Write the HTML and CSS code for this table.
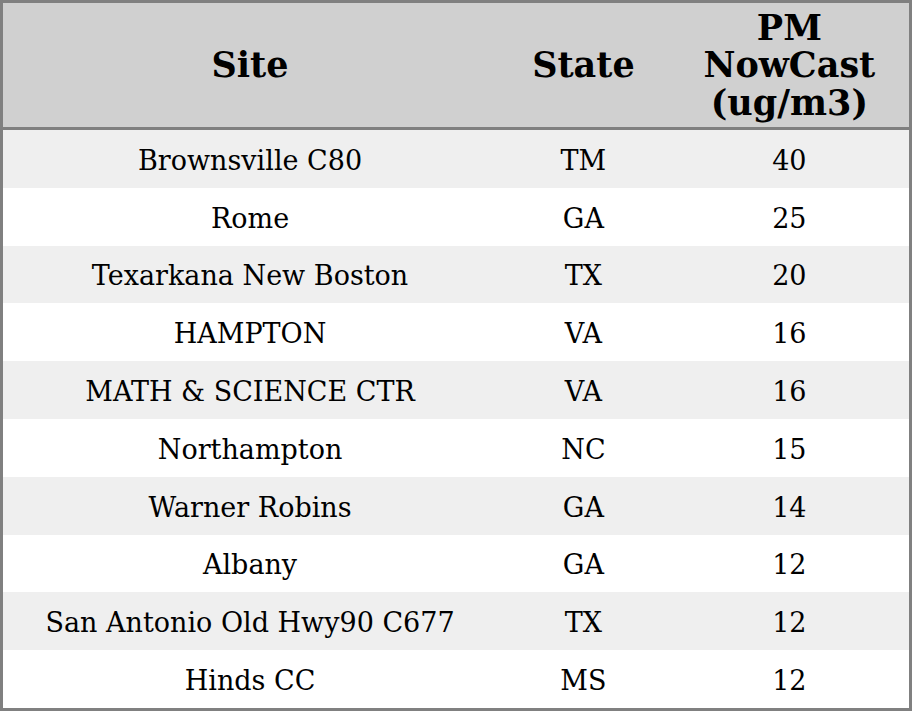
FILE: index.html
```html
<!DOCTYPE html>
<html>
<head>
<meta charset="utf-8">
<link rel="stylesheet" href="styles.css">
</head>
<body>
<table class="aq">
  <colgroup>
    <col class="c-site">
    <col class="c-state">
    <col class="c-pm">
  </colgroup>
  <thead>
    <tr><th>Site</th><th>State</th><th>PM<br>NowCast<br>(ug/m3)</th></tr>
  </thead>
  <tbody>
    <tr><td>Brownsville C80</td><td>TM</td><td>40</td></tr>
    <tr><td>Rome</td><td>GA</td><td>25</td></tr>
    <tr><td>Texarkana New Boston</td><td>TX</td><td>20</td></tr>
    <tr><td>HAMPTON</td><td>VA</td><td>16</td></tr>
    <tr><td>MATH &amp; SCIENCE CTR</td><td>VA</td><td>16</td></tr>
    <tr><td>Northampton</td><td>NC</td><td>15</td></tr>
    <tr><td>Warner Robins</td><td>GA</td><td>14</td></tr>
    <tr><td>Albany</td><td>GA</td><td>12</td></tr>
    <tr><td>San Antonio Old Hwy90 C677</td><td>TX</td><td>12</td></tr>
    <tr><td>Hinds CC</td><td>MS</td><td>12</td></tr>
  </tbody>
</table>
</body>
</html>
```
FILE: styles.css
```css
html, body {
  margin: 0;
  padding: 0;
  background: #ffffff;
}
.aq {
  width: 912px;
  border-collapse: collapse;
  border: 3px solid #808080;
  font-family: "DejaVu Serif", serif;
  color: #000;
  table-layout: fixed;
}
.c-site { width: 494px; }
.c-state { width: 172px; }
.c-pm { width: 240px; }
.aq th {
  background: #d0d0d0;
  font-size: 35px;
  font-weight: bold;
  line-height: 37.5px;
  height: 127px;
  padding: 0;
  text-align: center;
  vertical-align: middle;
  border-bottom: 3px solid #808080;
  box-sizing: border-box;
}
.aq td {
  font-size: 27px;
  text-align: center;
  vertical-align: middle;
  padding: 3px 0 0;
  height: 54.8px;
}
.aq tbody tr:nth-child(odd) td {
  background: #efefef;
}
```
